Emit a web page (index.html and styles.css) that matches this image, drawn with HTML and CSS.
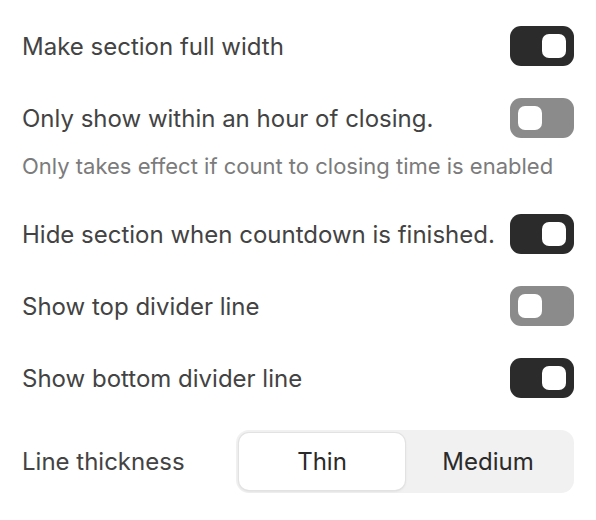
FILE: index.html
```html
<!DOCTYPE html>
<html>
<head>
<meta charset="utf-8">
<link rel="stylesheet" href="styles.css">
</head>
<body>
<div class="panel">
  <div class="row">
    <span class="label">Make section full width</span>
    <span class="toggle on"><span class="knob"></span></span>
  </div>
  <div class="row">
    <span class="label">Only show within an hour of closing.</span>
    <span class="toggle off"><span class="knob"></span></span>
  </div>
  <div class="hint">Only takes effect if count to closing time is enabled</div>
  <div class="row">
    <span class="label">Hide section when countdown is finished.</span>
    <span class="toggle on"><span class="knob"></span></span>
  </div>
  <div class="row">
    <span class="label">Show top divider line</span>
    <span class="toggle off"><span class="knob"></span></span>
  </div>
  <div class="row">
    <span class="label">Show bottom divider line</span>
    <span class="toggle on"><span class="knob"></span></span>
  </div>
  <div class="row thickness">
    <span class="label">Line thickness</span>
    <div class="segmented">
      <span class="seg active">Thin</span>
      <span class="seg">Medium</span>
    </div>
  </div>
</div>
</body>
</html>
```
FILE: styles.css
```css
html, body {
  margin: 0;
  padding: 0;
  background: #ffffff;
}
body {
  font-family: "Inter", "Liberation Sans", sans-serif;
  color: #444444;
}
.panel {
  padding: 10px 22px 0 22px;
  display: flex;
  flex-direction: column;
}
.row {
  height: 72px;
  display: flex;
  align-items: center;
  justify-content: space-between;
}
.label {
  font-size: 24px;
  color: #434343;
  white-space: nowrap;
}
.hint {
  font-size: 22px;
  line-height: 24px;
  color: #7b7b7b;
  padding-bottom: 20px;
}
.toggle {
  width: 64px;
  height: 40px;
  border-radius: 11px;
  box-sizing: border-box;
  padding: 8px;
  display: flex;
  flex-shrink: 0;
}
.toggle.on {
  background: #2b2b2b;
  justify-content: flex-end;
}
.toggle.off {
  background: #8b8b8b;
  justify-content: flex-start;
}
.knob {
  width: 24px;
  height: 24px;
  border-radius: 7px;
  background: #ffffff;
}
.thickness {
  height: 63px;
  margin-top: 16px;
}
.segmented {
  width: 338px;
  height: 63px;
  box-sizing: border-box;
  padding: 3px;
  background: #f1f1f1;
  border-radius: 13px;
  display: grid;
  grid-template-columns: 1fr 1fr;
}
.seg {
  display: flex;
  align-items: center;
  justify-content: center;
  font-size: 24px;
  color: #2a2a2a;
  border-radius: 10px;
}
.seg.active {
  background: #ffffff;
  box-shadow: 0 0 0 1px #e2e2e2, 0 1px 3px rgba(0,0,0,0.12);
}
```
